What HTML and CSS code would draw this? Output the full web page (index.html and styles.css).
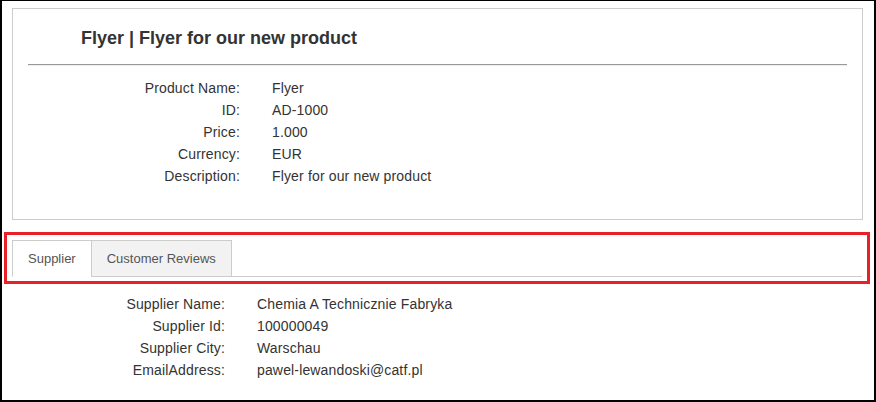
FILE: index.html
```html
<!DOCTYPE html>
<html>
<head>
<meta charset="utf-8">
<link rel="stylesheet" href="styles.css">
</head>
<body>
<div class="frame">
  <div class="panel">
    <h1 class="title">Flyer | Flyer for our new product</h1>
    <div class="rule"></div>
    <dl class="fields product">
      <dt>Product Name:</dt><dd>Flyer</dd>
      <dt>ID:</dt><dd>AD-1000</dd>
      <dt>Price:</dt><dd>1.000</dd>
      <dt>Currency:</dt><dd>EUR</dd>
      <dt>Description:</dt><dd>Flyer for our new product</dd>
    </dl>
  </div>
  <div class="highlight">
    <div class="tabs">
      <div class="tab active">Supplier</div>
      <div class="tab">Customer Reviews</div>
    </div>
  </div>
  <dl class="fields supplier">
    <dt>Supplier Name:</dt><dd>Chemia A Technicznie Fabryka</dd>
    <dt>Supplier Id:</dt><dd>100000049</dd>
    <dt>Supplier City:</dt><dd>Warschau</dd>
    <dt>EmailAddress:</dt><dd>pawel-lewandoski@catf.pl</dd>
  </dl>
</div>
</body>
</html>
```

FILE: styles.css
```css
* { box-sizing: border-box; }
html, body { margin: 0; padding: 0; background: #fff; }
body {
  font-family: "Liberation Sans", Arial, sans-serif;
  color: #333;
}
.frame {
  width: 876px;
  height: 402px;
  border: 2px solid #000;
  border-top-width: 1px;
  overflow: hidden;
}
.panel {
  margin: 7px 11px 0 10px;
  height: 212px;
  border: 1px solid #ccc;
  padding-top: 19px;
}
.title {
  margin: 0 0 16px 0;
  padding-left: 68px;
  font-size: 18px;
  line-height: 20px;
  font-weight: bold;
  color: #333;
}
.rule {
  margin: 0 15px 11px 15px;
  border-top: 1px solid #999;
  border-bottom: 1px solid #eee;
}
.fields {
  display: grid;
  column-gap: 32px;
  margin: 0;
  font-size: 14px;
  line-height: 22px;
  letter-spacing: 0.15px;
}
.fields dt { text-align: right; margin: 0; }
.fields dd { margin: 0; }
.product { grid-template-columns: 227px 1fr; }
.highlight {
  margin: 12px 4px 0 2px;
  height: 52px;
  border: 3px solid #e8202a;
  padding: 5px 5px 0 5px;
}
.tabs {
  display: flex;
  border-bottom: 1px solid #ccc;
  height: 37px;
}
.tab {
  height: 37px;
  padding: 0 15px;
  font-size: 13px;
  line-height: 35px;
  color: #555;
  background: #f2f2f2;
  border: 1px solid #ccc;
}
.tab.active {
  background: #fff;
  border-right: 0;
  border-bottom-color: #fff;
}
.supplier {
  grid-template-columns: 223px 1fr;
  margin-top: 9px;
}
```
